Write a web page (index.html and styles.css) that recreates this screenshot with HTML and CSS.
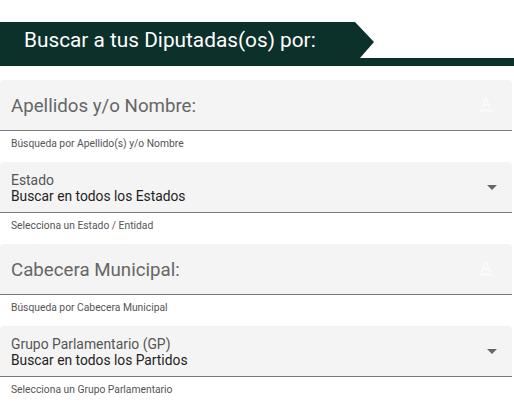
FILE: index.html
```html
<!DOCTYPE html>
<html lang="es">
<head>
<meta charset="utf-8">
<link rel="stylesheet" href="styles.css">
</head>
<body>
<div class="banner"><h1 class="banner-title">Buscar a tus Diputadas(os) por:</h1></div>
<div class="fields">
  <div class="block">
    <div class="card">
      <span class="big-label">Apellidos y/o Nombre:</span>
      <svg class="icon-a" viewBox="0 0 24 24" width="22" height="22"><path d="M5 17v2h14v-2H5zm4.5-4.2h5l.9 2.2h2.1L12.75 4h-1.5L6.5 15h2.1l.9-2.2zM12 5.98L13.87 11h-3.74L12 5.98z"/></svg>
    </div>
    <div class="helper">Búsqueda por Apellido(s) y/o Nombre</div>
  </div>
  <div class="block">
    <div class="card select">
      <div class="sel-text">
        <span class="small-label">Estado</span>
        <span class="value">Buscar en todos los Estados</span>
      </div>
      <span class="caret"></span>
    </div>
    <div class="helper">Selecciona un Estado / Entidad</div>
  </div>
  <div class="block">
    <div class="card">
      <span class="big-label">Cabecera Municipal:</span>
      <svg class="icon-a" viewBox="0 0 24 24" width="22" height="22"><path d="M5 17v2h14v-2H5zm4.5-4.2h5l.9 2.2h2.1L12.75 4h-1.5L6.5 15h2.1l.9-2.2zM12 5.98L13.87 11h-3.74L12 5.98z"/></svg>
    </div>
    <div class="helper">Búsqueda por Cabecera Municipal</div>
  </div>
  <div class="block">
    <div class="card select">
      <div class="sel-text">
        <span class="small-label">Grupo Parlamentario (GP)</span>
        <span class="value">Buscar en todos los Partidos</span>
      </div>
      <span class="caret"></span>
    </div>
    <div class="helper">Selecciona un Grupo Parlamentario</div>
  </div>
</div>
</body>
</html>
```
FILE: styles.css
```css
html, body {
  margin: 0;
  padding: 0;
  background: #ffffff;
  font-family: Roboto, "Liberation Sans", sans-serif;
}

.banner {
  margin-top: 22px;
  height: 44px;
  background: #0c302a;
  clip-path: polygon(0 0, 355px 0, 374px 20px, 360px 36px, 100% 36px, 100% 100%, 0 100%);
  display: flex;
  align-items: flex-start;
}

.banner-title {
  margin: 0;
  padding: 6px 0 0 24px;
  font-size: 20.8px;
  font-weight: 400;
  line-height: 24px;
  color: #ffffff;
}

.fields {
  margin-top: 14px;
  width: 512px;
  display: flex;
  flex-direction: column;
}

.block {
  height: 82px;
  display: flex;
  flex-direction: column;
}

.card {
  height: 50px;
  flex-shrink: 0;
  background: #f4f4f4;
  border-bottom: 1px solid #7a7a7a;
  border-radius: 4px 4px 0 0;
  display: flex;
  align-items: center;
  justify-content: space-between;
  padding: 0 13px 0 11px;
}

.big-label {
  font-size: 18.7px;
  color: #666666;
  padding-top: 2px;
}

.icon-a {
  fill: #fbfbfb;
  margin-right: 2px;
}

.select {
  padding-right: 15px;
}

.sel-text {
  display: flex;
  flex-direction: column;
  padding-top: 3px;
}

.small-label {
  font-size: 13.9px;
  line-height: 15px;
  font-weight: 400;
  color: #555555;
}

.value {
  font-size: 13.8px;
  line-height: 17px;
  color: #222222;
}

.caret {
  width: 0;
  height: 0;
  border-left: 5px solid transparent;
  border-right: 5px solid transparent;
  border-top: 5px solid #666666;
}

.helper {
  padding: 7px 0 0 11px;
  font-size: 10.3px;
  line-height: 12px;
  color: #555555;
}
```
